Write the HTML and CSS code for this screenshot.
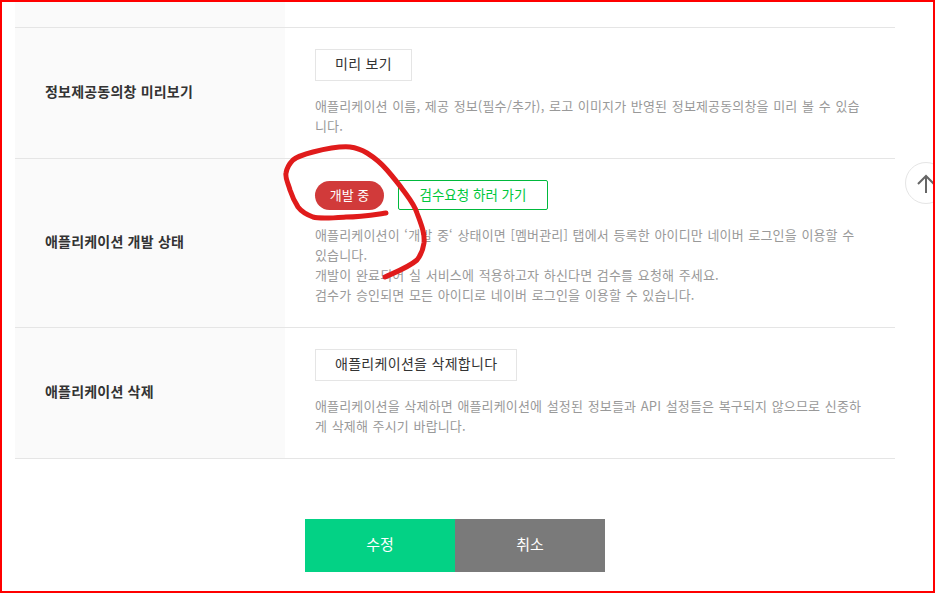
FILE: index.html
```html
<!DOCTYPE html>
<html lang="ko">
<head>
  <meta charset="UTF-8" />
  <title>애플리케이션 설정</title>
  <link rel="stylesheet" href="styles.css">
</head>
<body>

<div class="frame">
  <div class="content">
    <div class="row row-top">
      <div class="label"></div>
      <div class="value"></div>
    </div>

    <div class="row">
      <div class="label">정보제공동의창 미리보기</div>
      <div class="value">
        <button class="btn">미리 보기</button>
        <p class="desc">애플리케이션 이름, 제공 정보(필수/추가), 로고 이미지가 반영된 정보제공동의창을 미리 볼 수 있습니다.</p>
      </div>
    </div>

    <div class="row">
      <div class="label">애플리케이션 개발 상태</div>
      <div class="value">
        <div class="status">
          <span class="badge">개발 중</span>
          <a class="review" href="#">검수요청 하러 가기</a>
        </div>
        <p class="desc">애플리케이션이 ‘개발 중‘ 상태이면 [멤버관리] 탭에서 등록한 아이디만 네이버 로그인을 이용할 수 있습니다.<br>개발이 완료되어 실 서비스에 적용하고자 하신다면 검수를 요청해 주세요.<br>검수가 승인되면 모든 아이디로 네이버 로그인을 이용할 수 있습니다.</p>
      </div>
    </div>

    <div class="row">
      <div class="label">애플리케이션 삭제</div>
      <div class="value">
        <button class="btn">애플리케이션을 삭제합니다</button>
        <p class="desc">애플리케이션을 삭제하면 애플리케이션에 설정된 정보들과 API 설정들은 복구되지 않으므로 신중하게 삭제해 주시기 바랍니다.</p>
      </div>
    </div>

    <div class="actions">
      <button class="action action-save">수정</button>
      <button class="action action-cancel">취소</button>
    </div>
  </div>

  <!-- 위로 가기 -->
  <button class="to-top" aria-label="위로">
    <svg width="18" height="19" viewBox="0 0 18 19" fill="none" stroke="#666" stroke-width="2">
      <path d="M9 19V2M1 10l8-8 8 8"/>
    </svg>
  </button>

  <!-- 빨간 펜 표시 -->
  <svg class="scribble" width="935" height="593" viewBox="0 0 935 593" fill="none">
    <path d="M386 213C372 215 360 217 346 217C332 218 320 219 313 217C305 214 301 211 298 207C294 201 292 196 290 190C288 183 285 178 286 173C287 167 289 164 293 160C298 156 305 154 313 152C325 149 338 146 350 147C358 148 362 150 367 153C375 158 381 163 387 170C393 177 398 183 403 190C408 197 414 204 417 213C421 224 425 233 424 243C423 250 421 255 417 260C409 267 396 272 385 277" stroke="#e01b1b" stroke-width="5" stroke-linecap="round" stroke-linejoin="round"/>
  </svg>
</div>

</body>
</html>
```

FILE: styles.css
```css
html, body {
  margin: 0;
  padding: 0;
  height: 100%;
  overflow: hidden;
}

body {
  font-family: "Noto Sans CJK KR", "Noto Sans", sans-serif;
  font-size: 13px;
  color: #333;
  background: white;
}

.frame {
  position: relative;
  box-sizing: border-box;
  height: 593px;
  border: 2px solid #ff0000;
  overflow: hidden;
}

.content {
  width: 880px;
  margin-left: 13px;
}

.row {
  display: flex;
  border-bottom: 1px solid #e5e5e5;
}

.row-top {
  height: 25px;
}

.label {
  display: flex;
  align-items: center;
  box-sizing: border-box;
  width: 270px;
  padding: 0 0 4px 30px;
  background: #fafafa;
  font-size: 14px;
  font-weight: 700;
  letter-spacing: 0.2px;
  color: #333;
}

.value {
  flex: 1;
  padding: 21px 30px;
}

.btn {
  height: 32px;
  padding: 0 19px 4px;
  border: 1px solid #e5e5e5;
  background: white;
  font-family: inherit;
  font-size: 14px;
  letter-spacing: 0.3px;
  color: #333;
}

.desc {
  margin: 15px 0 0;
  padding-bottom: 1px;
  font-size: 13px;
  line-height: 20px;
  letter-spacing: 0.15px;
  word-spacing: 0.8px;
  color: #999;
}

.status {
  display: flex;
  align-items: center;
  gap: 14px;
  height: 30px;
}

.badge {
  width: 69px;
  height: 29px;
  border-radius: 15px;
  background: #d13a3a;
  color: white;
  font-size: 13px;
  line-height: 27px;
  text-align: center;
}

.review {
  box-sizing: border-box;
  width: 150px;
  height: 30px;
  border: 1px solid #00b93c;
  border-radius: 2px;
  font-size: 13.5px;
  line-height: 26px;
  text-align: center;
  color: #00c73c;
  text-decoration: none;
}

.actions {
  display: flex;
  justify-content: center;
  margin-top: 60px;
}

.action {
  width: 150px;
  height: 53px;
  padding: 0 0 4px;
  border: none;
  color: white;
  font-family: inherit;
  font-size: 15px;
}

.action-save {
  background: #03d285;
}

.action-cancel {
  background: #7a7a7a;
}

.to-top {
  position: absolute;
  top: 160px;
  left: 903px;
  width: 42px;
  height: 42px;
  padding: 0;
  border: 1px solid #e5e5e5;
  border-radius: 50%;
  background: white;
  display: flex;
  align-items: center;
  justify-content: center;
}

.scribble {
  position: absolute;
  top: -2px;
  left: -2px;
  pointer-events: none;
}
```
